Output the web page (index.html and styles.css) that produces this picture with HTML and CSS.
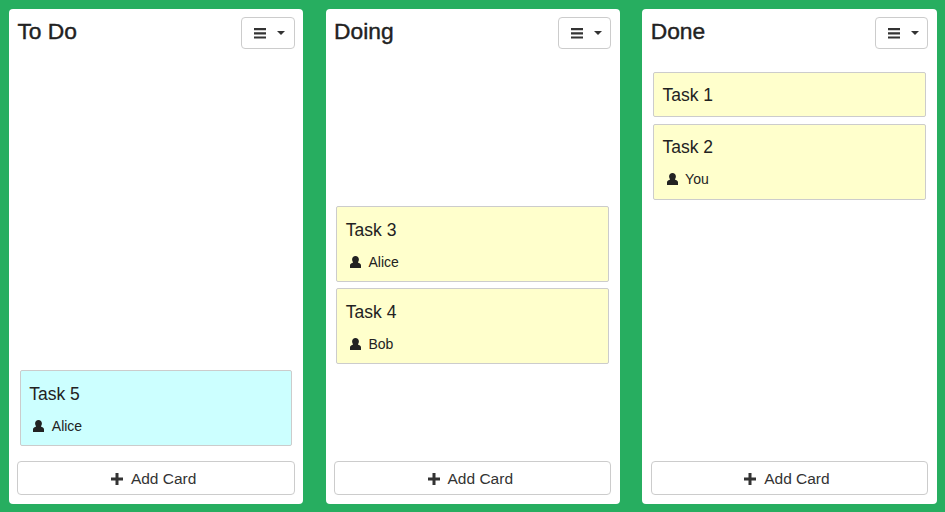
FILE: index.html
```html
<!DOCTYPE html>
<html lang="en">
<head>
    <meta charset="UTF-8">
    <title>Kanban Board</title>
    <link rel="stylesheet" href="styles.css">
</head>
<body>
    <div class="board">
        <section class="column">
            <header class="column-head">
                <h2>To Do</h2>
                <button class="menu-btn">
                    <svg class="icon-menu" viewBox="0 0 12 11"><path d="M0 0h12v2.200H0zM0 4.200h12v2.200H0zM0 8.400h12v2.200H0z"/></svg>
                    <span class="caret"></span>
                </button>
            </header>
            <div class="cards cards-todo">
                <div class="card card-cyan">
                    <div class="card-title">Task 5</div>
                    <div class="card-user">
                        <svg class="icon-user" viewBox="0 0 11 12"><path d="M5.500 0C7.500 0 8.900 1.400 8.900 3.500c0 1.200-.5 2.100-1 2.700.1.300.5.500 1.100.7 1.300.5 2 1.200 2 2.500V12H0V9.400c0-1.300.7-2 2-2.500.6-.2 1-.4 1.100-.7-.5-.6-1-1.500-1-2.700C2.100 1.400 3.500 0 5.500 0z"/></svg>
                        <span>Alice</span>
                    </div>
                </div>
            </div>
            <button class="add-btn">
                <svg class="icon-plus" viewBox="0 0 12 12"><path d="M4.500 0h3v4.500H12v3H7.500V12h-3V7.500H0v-3h4.500z"/></svg>
                <span>Add Card</span>
            </button>
        </section>
        <section class="column">
            <header class="column-head">
                <h2>Doing</h2>
                <button class="menu-btn">
                    <svg class="icon-menu" viewBox="0 0 12 11"><path d="M0 0h12v2.200H0zM0 4.200h12v2.200H0zM0 8.400h12v2.200H0z"/></svg>
                    <span class="caret"></span>
                </button>
            </header>
            <div class="cards cards-doing">
                <div class="card">
                    <div class="card-title">Task 3</div>
                    <div class="card-user">
                        <svg class="icon-user" viewBox="0 0 11 12"><path d="M5.500 0C7.500 0 8.900 1.400 8.900 3.500c0 1.200-.5 2.100-1 2.700.1.300.5.500 1.100.7 1.300.5 2 1.200 2 2.500V12H0V9.400c0-1.300.7-2 2-2.500.6-.2 1-.4 1.100-.7-.5-.6-1-1.500-1-2.700C2.100 1.400 3.500 0 5.500 0z"/></svg>
                        <span>Alice</span>
                    </div>
                </div>
                <div class="card">
                    <div class="card-title">Task 4</div>
                    <div class="card-user">
                        <svg class="icon-user" viewBox="0 0 11 12"><path d="M5.500 0C7.500 0 8.900 1.400 8.900 3.500c0 1.200-.5 2.100-1 2.700.1.300.5.500 1.100.7 1.300.5 2 1.200 2 2.500V12H0V9.400c0-1.300.7-2 2-2.500.6-.2 1-.4 1.100-.7-.5-.6-1-1.500-1-2.700C2.100 1.400 3.500 0 5.500 0z"/></svg>
                        <span>Bob</span>
                    </div>
                </div>
            </div>
            <button class="add-btn">
                <svg class="icon-plus" viewBox="0 0 12 12"><path d="M4.500 0h3v4.500H12v3H7.500V12h-3V7.500H0v-3h4.500z"/></svg>
                <span>Add Card</span>
            </button>
        </section>
        <section class="column">
            <header class="column-head">
                <h2>Done</h2>
                <button class="menu-btn">
                    <svg class="icon-menu" viewBox="0 0 12 11"><path d="M0 0h12v2.200H0zM0 4.200h12v2.200H0zM0 8.400h12v2.200H0z"/></svg>
                    <span class="caret"></span>
                </button>
            </header>
            <div class="cards cards-done">
                <div class="card">
                    <div class="card-title">Task 1</div>
                </div>
                <div class="card">
                    <div class="card-title">Task 2</div>
                    <div class="card-user">
                        <svg class="icon-user" viewBox="0 0 11 12"><path d="M5.500 0C7.500 0 8.900 1.400 8.900 3.500c0 1.200-.5 2.100-1 2.700.1.300.5.500 1.100.7 1.300.5 2 1.200 2 2.500V12H0V9.400c0-1.300.7-2 2-2.500.6-.2 1-.4 1.100-.7-.5-.6-1-1.500-1-2.700C2.100 1.400 3.500 0 5.500 0z"/></svg>
                        <span>You</span>
                    </div>
                </div>
            </div>
            <button class="add-btn">
                <svg class="icon-plus" viewBox="0 0 12 12"><path d="M4.500 0h3v4.500H12v3H7.500V12h-3V7.500H0v-3h4.500z"/></svg>
                <span>Add Card</span>
            </button>
        </section>
    </div>
</body>
</html>
```

FILE: styles.css
```css
html, body {
    height: 100%;
}
body {
    font-family: 'Liberation Sans', Arial, sans-serif;
    margin: 0;
    background-color: #27AE60;
    color: #222;
    overflow: hidden;
}
.board {
    box-sizing: border-box;
    height: 512px;
    padding: 9px 0 8px 8.9px;
    display: grid;
    grid-template-columns: repeat(3, 294.5px);
    gap: 22.15px;
}
.column {
    background-color: #FFFFFF;
    border-radius: 4px;
    padding: 8px 8.55px 9px;
    display: flex;
    flex-direction: column;
}
.column-head {
    display: flex;
    justify-content: space-between;
    align-items: flex-start;
}
.column-head h2 {
    margin: 0;
    font-size: 22.8px;
    line-height: 29px;
    font-weight: 400;
    -webkit-text-stroke: 0.4px #222;
}
.menu-btn {
    width: 53.5px;
    height: 32px;
    box-sizing: border-box;
    background-color: #FFFFFF;
    border: 1px solid #CCC;
    border-radius: 4px;
    padding: 0 0 0 12px;
    display: flex;
    align-items: center;
    gap: 11px;
}
.icon-menu {
    width: 12px;
    height: 11px;
    fill: #333;
}
.caret {
    width: 0;
    height: 0;
    border-top: 4px solid #333;
    border-left: 4px solid transparent;
    border-right: 4px solid transparent;
}
.cards {
    flex: 1;
    padding: 0 2.4px;
    display: flex;
    flex-direction: column;
    gap: 6.4px;
}
.cards-todo {
    padding-top: 321px;
}
.cards-doing {
    padding-top: 157px;
}
.cards-done {
    padding-top: 22.9px;
}
.card {
    border: 1px solid #CCC;
    border-radius: 2px;
    background-color: #FFFFCC;
    padding: 12.5px 8.4px 9.9px;
}
.card-cyan {
    background-color: #CCFFFF;
}
.card-title {
    font-size: 17.5px;
    line-height: 20.9px;
}
.card-user {
    margin: 11.1px 0 -0.4px;
    padding-left: 4.2px;
    display: flex;
    align-items: center;
    gap: 7.4px;
    font-size: 14px;
    line-height: 20px;
}
.icon-user {
    width: 11px;
    height: 12px;
    fill: #222;
}
.add-btn {
    width: 100%;
    height: 34px;
    flex-shrink: 0;
    background-color: #FFFFFF;
    border: 1px solid #CCC;
    border-radius: 4px;
    color: #333;
    font-family: inherit;
    font-size: 15.5px;
    padding: 1px 5px 0 0;
    display: flex;
    align-items: center;
    justify-content: center;
    gap: 8px;
}
.icon-plus {
    width: 12px;
    height: 12px;
    fill: #333;
}
```
